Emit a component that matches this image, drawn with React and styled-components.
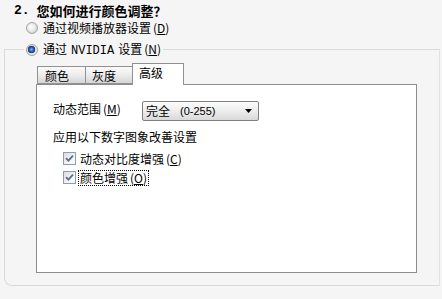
import React from "react";
import styled, { createGlobalStyle } from "styled-components";

const Global = createGlobalStyle`
  html, body { margin: 0; padding: 0; }
  body {
    background: #f5f5f5;
    font-family: "Noto Sans CJK SC", "Liberation Sans", sans-serif;
    font-size: 12px;
    color: #000;
    width: 442px;
    height: 299px;
    overflow: hidden;
  }
`;

const Page = styled.div`
  width: 442px;
  height: 299px;
  box-sizing: border-box;
  padding-top: 3px;
  display: flex;
  flex-direction: column;
`;

const Title = styled.div`
  margin-left: 14px;
  height: 15px;
  line-height: 15px;
  font-size: 13px;
  font-weight: 700;
  display: flex;
  gap: 7px;
  white-space: nowrap;
`;

const TitleNum = styled.span`
  font-family: "Liberation Mono", monospace;
  font-weight: 700;
`;

const RadioRow = styled.label`
  display: flex;
  align-items: center;
  gap: 5px;
  height: 19px;
  line-height: 19px;
  margin-left: ${(p) => p.$indent || 0}px;
  white-space: nowrap;
`;

const RadioDot = styled.span`
  width: 12px;
  height: 12px;
  box-sizing: border-box;
  border-radius: 50%;
  border: 1px solid #a3a3a3;
  background: ${(p) =>
    p.$on
      ? "radial-gradient(circle at 45% 45%, #8fb4e8 0, #2d63b8 2px, #163f86 3.5px, #dcdcdc 4px, #f6f6f6 6px)"
      : "radial-gradient(circle at 40% 40%, #ffffff 0, #e9e9e9 4px, #d6d6d6 6px)"};
  flex: none;
`;

const KeyWrap = styled.span`
  margin-left: 2px;
`;

const KeyLetter = styled.span`
  text-decoration: underline;
`;

const Key = ({ k }) => (
  <KeyWrap>
    (<KeyLetter>{k}</KeyLetter>)
  </KeyWrap>
);

const Mono = styled.span`
  font-family: "Liberation Mono", monospace;
  margin: 0 4px;
`;

const Group = styled.fieldset`
  margin: 3px 0 0 4px;
  width: 436px;
  box-sizing: border-box;
  padding: 0;
  border: 1px solid #dadada;
  border-right-color: #e2e2e2;
  border-radius: 0 0 0 8px;
  height: 246px;
`;

const Legend = styled.legend`
  margin-left: 19px;
  padding: 0 2px;
`;

const Tabs = styled.div`
  margin: 4px 0 0 31px;
  display: flex;
  align-items: flex-end;
  height: 21px;
  position: relative;
  z-index: 1;
`;

const Tab = styled.div`
  box-sizing: border-box;
  width: ${(p) => p.$w}px;
  height: ${(p) => (p.$active ? 22 : 18)}px;
  margin-left: ${(p) => p.$ml || 0}px;
  margin-bottom: ${(p) => (p.$active ? -1 : 0)}px;
  border: 1px solid #919191;
  border-bottom: ${(p) => (p.$active ? "none" : "1px solid #919191")};
  border-left-width: ${(p) => (p.$noLeft ? 0 : 1)}px;
  background: ${(p) =>
    p.$active ? "#ffffff" : "linear-gradient(#fbfbfb, #ececec 50%, #d6d6d6)"};
  padding-left: ${(p) => p.$pl}px;
  line-height: ${(p) => (p.$active ? 18 : 17)}px;
  font-size: 12px;
`;

const Panel = styled.div`
  margin-left: 31px;
  width: 381px;
  height: 189px;
  box-sizing: border-box;
  background: #fff;
  border: 1px solid #8e8e8e;
  padding: 16px 0 0 16px;
  display: flex;
  flex-direction: column;
`;

const RangeRow = styled.div`
  display: flex;
  align-items: center;
  height: 20px;
`;

const FieldLabel = styled.span`
  width: 89px;
  flex: none;
  margin-top: -5px;
`;

const Select = styled.div`
  width: 117px;
  height: 20px;
  box-sizing: border-box;
  border: 1px solid #808080;
  border-radius: 2px;
  background: linear-gradient(#fdfdfd, #ededed 50%, #d9d9d9);
  display: flex;
  align-items: center;
  padding: 0 6px 0 3px;
  justify-content: space-between;
`;

const SelectText = styled.span`
  display: flex;
  gap: 10px;
  line-height: 18px;
`;

const Num = styled.span`
  font-family: "Liberation Sans", sans-serif;
  font-size: 11px;
`;

const Heading = styled.div`
  margin-top: 8px;
  line-height: 16px;
`;

const CheckList = styled.div`
  margin-top: 4px;
  margin-left: 10px;
  display: flex;
  flex-direction: column;
`;

const CheckRow = styled.label`
  display: flex;
  align-items: center;
  gap: 3px;
  height: 19px;
`;

const Box = styled.span`
  width: 13px;
  height: 13px;
  box-sizing: border-box;
  border: 1px solid #8c9cb4;
  background: linear-gradient(135deg, #dcdcdc, #f8f8f8 70%);
  display: flex;
  align-items: center;
  justify-content: center;
  flex: none;
`;

const CheckText = styled.span`
  line-height: 14px;
  padding: 0 1px;
  outline: ${(p) => (p.$focus ? "1px dotted #000" : "none")};
`;

const Check = () => (
  <Box>
    <svg width="9" height="9" viewBox="0 0 9 9">
      <path d="M1 4.2 L3.4 6.6 L8 1.6" fill="none" stroke="#5a6d94" strokeWidth="1.8" />
    </svg>
  </Box>
);

export default function App() {
  return (
    <>
      <Global />
      <Page>
        <Title>
          <TitleNum>2.</TitleNum>
          <span>您如何进行颜色调整？</span>
        </Title>
        <RadioRow $indent={26}>
          <RadioDot />
          <span>
            通过视频播放器设置<Key k="D" />
          </span>
        </RadioRow>
        <Group>
          <Legend>
            <RadioRow>
              <RadioDot $on />
              <span>
                通过<Mono>NVIDIA</Mono>设置<Key k="N" />
              </span>
            </RadioRow>
          </Legend>
          <Tabs>
            <Tab $w={49} $pl={7} $ml={1}>颜色</Tab>
            <Tab $w={47} $pl={6} $noLeft>灰度</Tab>
            <Tab $w={52} $pl={6} $ml={-1} $active>高级</Tab>
          </Tabs>
          <Panel>
            <RangeRow>
              <FieldLabel>
                动态范围<Key k="M" />
              </FieldLabel>
              <Select>
                <SelectText>
                  <span>完全</span>
                  <Num>(0-255)</Num>
                </SelectText>
                <svg width="7" height="4" viewBox="0 0 7 4">
                  <path d="M0 0 H7 L3.5 4 Z" fill="#000" />
                </svg>
              </Select>
            </RangeRow>
            <Heading>应用以下数字图象改善设置</Heading>
            <CheckList>
              <CheckRow>
                <Check />
                <CheckText>
                  动态对比度增强<Key k="C" />
                </CheckText>
              </CheckRow>
              <CheckRow>
                <Check />
                <CheckText $focus>
                  颜色增强<Key k="O" />
                </CheckText>
              </CheckRow>
            </CheckList>
          </Panel>
        </Group>
      </Page>
    </>
  );
}
